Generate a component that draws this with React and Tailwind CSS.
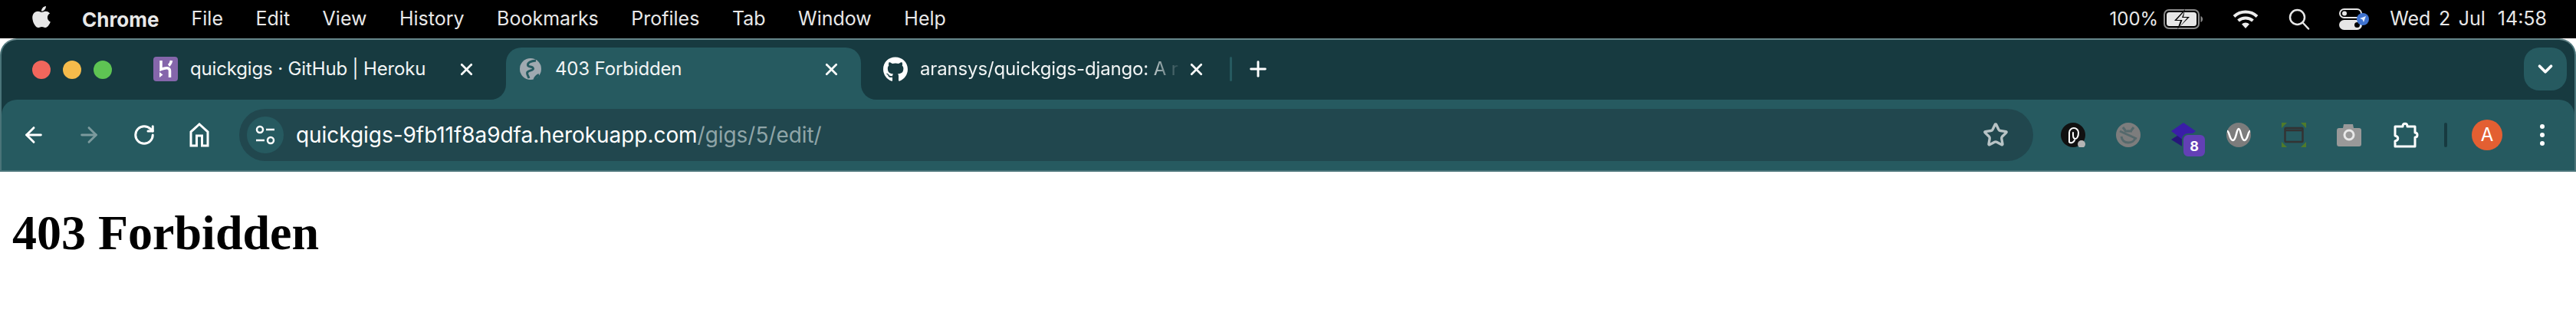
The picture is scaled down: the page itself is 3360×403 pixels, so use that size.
import { ArrowLeft, ArrowRight, RotateCw, Star, X, Plus, ChevronDown } from "lucide-react";
import { FaApple, FaGithub } from "react-icons/fa";

const menuItems = ["File", "Edit", "View", "History", "Bookmarks", "Profiles", "Tab", "Window", "Help"];

function Battery() {
  return (
    <svg width="52" height="26" viewBox="0 0 52 26">
      <rect x="1" y="1" width="45" height="24" rx="6" fill="none" stroke="#8a8a8a" strokeWidth="2" />
      <rect x="4" y="4" width="39" height="18" rx="3.500" fill="#e6e6e6" />
      <path d="M48.500 9c2 .8 2.500 2.400 2.500 4s-.5 3.200-2.500 4z" fill="#8a8a8a" />
      <path d="M28 0 L14 15 H22 L18 26 L34 10 H26 Z" fill="#000" />
      <path d="M27 3 L17 14 H24.500 L21 23 L31 11 H24 Z" fill="#e6e6e6" />
    </svg>
  );
}

function Wifi() {
  return (
    <svg width="34" height="26" viewBox="0 0 34 26" fill="none" stroke="#ececec" strokeWidth="4">
      <path d="M2 9.500a22 22 0 0 1 30 0" />
      <path d="M7.500 15a14.500 14.500 0 0 1 19 0" />
      <path d="M17 25l-5-5.500a7.500 7.500 0 0 1 10 0z" fill="#ececec" stroke="none" />
    </svg>
  );
}

function Search() {
  return (
    <svg width="28" height="28" viewBox="0 0 28 28" fill="none" stroke="#e6e6e6" strokeWidth="2.500" strokeLinecap="round">
      <circle cx="11.500" cy="11.500" r="9.500" />
      <path d="M18.500 18.500l7.500 8" />
    </svg>
  );
}

function ControlCenter() {
  return (
    <svg width="40" height="28" viewBox="0 0 40 28">
      <rect x="1" y="1" width="28" height="11" rx="5.500" fill="none" stroke="#e6e6e6" strokeWidth="2" />
      <circle cx="7" cy="6.500" r="3" fill="#e6e6e6" />
      <rect x="0" y="15" width="30" height="13" rx="6.500" fill="#e6e6e6" />
      <circle cx="23.500" cy="21.500" r="3.500" fill="#000" />
      <circle cx="31" cy="14" r="8" fill="#3f73d0" />
      <path d="M35 10l-3 8-1.500-3.500L27 13z" fill="#e6eefc" />
    </svg>
  );
}

function HerokuIcon() {
  return (
    <svg width="32" height="32" viewBox="0 0 32 32" fill="none">
      <rect width="32" height="32" rx="4" fill="#8566ab" />
      <path d="M10 5v11.500c3.500-1.500 6-2 8-1.800 3 .3 3.500 2 3.500 3.800V27" stroke="#fff" strokeWidth="3.500" />
      <path d="M23.500 5c-.5 2.500-1.500 5-3.500 6.500" stroke="#fff" strokeWidth="3.500" />
      <path d="M8 20l4.500 3.500L8 27z" fill="#fff" />
    </svg>
  );
}

function GlobeIcon() {
  return (
    <svg width="32" height="32" viewBox="0 0 32 32" fill="none">
      <circle cx="16" cy="16" r="14" fill="#a0a9b0" />
      <path d="M23 5c-7 .5-11 3-10.500 6 .5 3 6.500 1 7 4.500.3 2.500-5.500 2-7.500 4.500-1.500 2 .5 4 2 8" stroke="#265a60" strokeWidth="3" />
      <path d="M21 30c1-3 2.500-5 6-6.500" stroke="#265a60" strokeWidth="3" />
    </svg>
  );
}

function HomeIcon() {
  return (
    <svg width="26" height="32" viewBox="0 0 26 32" fill="none" stroke="#fff" strokeWidth="3">
      <path d="M2 30V12L13 2l11 10v18h-7.500V17h-7v13z" />
    </svg>
  );
}

function TuneIcon() {
  return (
    <svg width="26" height="26" viewBox="0 0 26 26" fill="none" stroke="#fff" strokeWidth="2.500">
      <circle cx="6" cy="6" r="4" />
      <path d="M14 6h11" />
      <circle cx="20" cy="20" r="4" />
      <path d="M1 20h11" />
    </svg>
  );
}

function ThreadsExt() {
  return (
    <svg width="32" height="32" viewBox="0 0 32 32" fill="none">
      <circle cx="16" cy="16" r="16" fill="#111" />
      <path d="M11 25V13a6 6 0 0 1 12 0c0 5-2 8-4 8s-3-2-3-5v-3" stroke="#fff" strokeWidth="2" strokeLinecap="round" />
      <path d="M11 25c1 2 5 2 7-2" stroke="#fff" strokeWidth="2" strokeLinecap="round" />
      <circle cx="27" cy="28" r="5" fill="#b5b5b5" />
    </svg>
  );
}

function BugExt() {
  return (
    <svg width="32" height="32" viewBox="0 0 32 32" fill="none">
      <circle cx="16" cy="16" r="16" fill="#7d7d7d" />
      <path d="M9 6l3 4M23 6l-3 4M11 11h10" stroke="#55696c" strokeWidth="3" />
      <path d="M5 11l22 10" stroke="#55696c" strokeWidth="3" />
      <path d="M7 18c1 6 5 8 9 8s8-2 9-6" stroke="#55696c" strokeWidth="3" />
    </svg>
  );
}

function StackExt() {
  return (
    <svg width="32" height="32" viewBox="0 0 32 32">
      <path d="M16 12l16 10-16 10L0 22z" fill="#26167a" />
      <path d="M16 0l16 11-16 12L0 11z" fill="#3a1ea8" />
    </svg>
  );
}

function WaveExt() {
  return (
    <svg width="32" height="32" viewBox="0 0 32 32" fill="none">
      <circle cx="16" cy="16" r="16" fill="#7c7c7c" />
      <path d="M1 11c3 0 3 12 7.500 12S13 8 16 8s3 15 7.500 15S28 11 31 11" stroke="#fff" strokeWidth="2.500" />
    </svg>
  );
}

function ScreenExt() {
  return (
    <svg width="32" height="32" viewBox="0 0 32 32" fill="none">
      <path d="M0 0h7L0 7zM32 0h-7l7 7zM0 32h7l-7-7zM32 32h-7l7-7z" fill="#4f7a2a" />
      <rect x="4.500" y="7" width="23" height="18" rx="1" stroke="#333" strokeWidth="2.500" />
      <path d="M4 10h24" stroke="#333" strokeWidth="2.500" />
    </svg>
  );
}

function CameraExt() {
  return (
    <svg width="32" height="30" viewBox="0 0 32 30">
      <path d="M3 6h5l1-5h12l1 5h7a3 3 0 0 1 3 3v18a3 3 0 0 1-3 3H3a3 3 0 0 1-3-3V9a3 3 0 0 1 3-3z" fill="#999" />
      <circle cx="16" cy="15" r="6" fill="none" stroke="#e8e8e8" strokeWidth="3" />
    </svg>
  );
}

function PuzzleIcon() {
  return (
    <svg width="34" height="34" viewBox="0 0 34 34" fill="none" stroke="#fff" strokeWidth="3" strokeLinejoin="round">
      <path d="M2 6h10c0-5 6-5 6 0h10v8c4 0 4 6 0 6v12H2v-7c5-1 5-6 0-7z" />
    </svg>
  );
}

function BrowserTab({ icon, title, active, fade }) {
  return (
    <div
      className={`relative flex h-[68px] w-[463px] shrink-0 items-start rounded-t-[20px] pl-[16px] pt-[12px] ${
        active ? "bg-[#265a60]" : ""
      }`}
    >
      {active && (
        <>
          <div className="absolute bottom-0 left-[-20px] h-5 w-5 bg-[#265a60]">
            <div className="h-full w-full rounded-br-[20px] bg-[#173a40]" />
          </div>
          <div className="absolute bottom-0 right-[-20px] h-5 w-5 bg-[#265a60]">
            <div className="h-full w-full rounded-bl-[20px] bg-[#173a40]" />
          </div>
        </>
      )}
      <div className="flex h-8 w-8 shrink-0 items-center justify-center">{icon}</div>
      <div
        className={`ml-[16px] h-8 w-[341px] overflow-hidden whitespace-nowrap text-[24px] leading-8 tracking-[-0.15px] text-[#f2f5f5] ${
          fade ? "[mask-image:linear-gradient(to_right,black_86%,transparent_100%)]" : ""
        }`}
      >
        {title}
      </div>
      <div className="ml-[5px] flex h-8 w-7 shrink-0 items-center justify-center">
        <X size={25} color="#fff" strokeWidth={2.6} />
      </div>
    </div>
  );
}

export default function App() {
  return (
    <div className="h-[403px] w-[3360px] overflow-hidden bg-white font-['Inter',sans-serif]">
      {/* menu bar */}
      <div className="flex h-[50px] items-center justify-between bg-black pl-[40px] pr-[38px] text-[25px] text-[#e8e8e8]">
        <div className="flex items-center">
          <FaApple size={32} color="#e8e8e8" className="mb-[6px] w-[28px]" />
          <span className="ml-[39px] text-[26px] font-bold">Chrome</span>
          <div className="ml-[42px] flex gap-[42.5px]">
            {menuItems.map((item) => (
              <span key={item}>{item}</span>
            ))}
          </div>
        </div>
        <div className="flex items-center">
          <span className="text-[24px]">100%</span>
          <div className="ml-[7px]"><Battery /></div>
          <div className="ml-[38px]"><Wifi /></div>
          <div className="ml-[39px]"><Search /></div>
          <div className="ml-[38px]"><ControlCenter /></div>
          <span className="ml-[26px] [word-spacing:3.5px]">Wed 2 Jul</span>
          <span className="ml-[16px]">14:58</span>
        </div>
      </div>

      {/* browser window */}
      <div className="rounded-t-[22px] border-x-2 border-y-2 border-x-[#4a7479] border-t-[#66868a] border-b-[#4a7479] bg-[#173a40]">
        {/* tab strip */}
        <div className="flex h-[78px] items-start pt-[10px]">
          <div className="ml-[40px] mt-[17px] flex gap-[16px]">
            <div className="h-6 w-6 rounded-full bg-[#f1665c]" />
            <div className="h-6 w-6 rounded-full bg-[#f5bb4b]" />
            <div className="h-6 w-6 rounded-full bg-[#5ec453]" />
          </div>
          <div className="ml-[38px] flex gap-[13px]">
            <BrowserTab icon={<HerokuIcon />} title="quickgigs · GitHub | Heroku" />
            <BrowserTab icon={<GlobeIcon />} title="403 Forbidden" active />
            <BrowserTab icon={<FaGithub size={33} color="#fff" />} title="aransys/quickgigs-django: A r" fade />
          </div>
          <div className="ml-[5px] mt-[12px] h-[32px] w-[3px] rounded-full bg-[#265a60]" />
          <div className="ml-[18px] mt-[12px] flex h-8 w-8 items-center justify-center">
            <Plus size={32} color="#fff" strokeWidth={2.2} />
          </div>
          <div className="ml-auto mr-[10px] flex h-[56px] w-[56px] items-center justify-center rounded-[20px] bg-[#265a60]">
            <ChevronDown size={30} color="#fff" strokeWidth={3} />
          </div>
        </div>

        {/* toolbar */}
        <div className="flex h-[92px] items-center rounded-t-[20px] bg-[#265a60] pl-[6px]">
          <div className="flex h-8 w-[72px] items-center justify-center">
            <ArrowLeft size={32} color="#fff" strokeWidth={2.2} />
          </div>
          <div className="flex h-8 w-[72px] items-center justify-center">
            <ArrowRight size={32} color="#7c9a9d" strokeWidth={2.2} />
          </div>
          <div className="flex h-8 w-[72px] items-center justify-center">
            <RotateCw size={30} color="#fff" strokeWidth={2.4} />
          </div>
          <div className="flex h-8 w-[72px] items-center justify-center">
            <HomeIcon />
          </div>

          {/* omnibox */}
          <div className="ml-[16px] flex h-[68px] w-[2340px] shrink-0 items-center rounded-full bg-[#21474e] pl-[10px] pr-[32px]">
            <div className="flex h-[48px] w-[48px] items-center justify-center rounded-full bg-[#265a60]">
              <TuneIcon />
            </div>
            <div className="ml-[16px] text-[28px] tracking-[-0.05px] text-white">
              quickgigs-9fb11f8a9dfa.herokuapp.com<span className="text-[#8fa5a8]">/gigs/5/edit/</span>
            </div>
            <Star size={34} color="#b8c3c5" strokeWidth={2.4} className="ml-auto" />
          </div>

          {/* extensions */}
          <div className="ml-[36px] flex items-center gap-[40px]">
            <ThreadsExt />
            <BugExt />
            <div className="relative h-8 w-8">
              <StackExt />
              <div className="absolute left-[14px] top-[14px] flex h-[32px] w-[32px] items-center justify-center rounded-[8px] border-2 border-[#265a60] bg-[#6340b5] text-[18px] font-bold text-white">
                8
              </div>
            </div>
            <WaveExt />
            <ScreenExt />
            <CameraExt />
          </div>
          <div className="ml-[42px]"><PuzzleIcon /></div>
          <div className="ml-[32px] h-[32px] w-[4px] rounded-full bg-[#173a40]" />
          <div className="ml-[32px] flex h-[40px] w-[40px] items-center justify-center rounded-full bg-[#e35f32] text-[24px] text-white">
            A
          </div>
          <div className="ml-[49px] flex flex-col gap-[5px]">
            <div className="h-[6px] w-[6px] rounded-full bg-white" />
            <div className="h-[6px] w-[6px] rounded-full bg-white" />
            <div className="h-[6px] w-[6px] rounded-full bg-white" />
          </div>
        </div>
      </div>

      {/* page content */}
      <h1 className="ml-[16px] mt-[43px] font-['Liberation_Serif',serif] text-[64px] font-bold leading-[74px] text-black">
        403 Forbidden
      </h1>
    </div>
  );
}
